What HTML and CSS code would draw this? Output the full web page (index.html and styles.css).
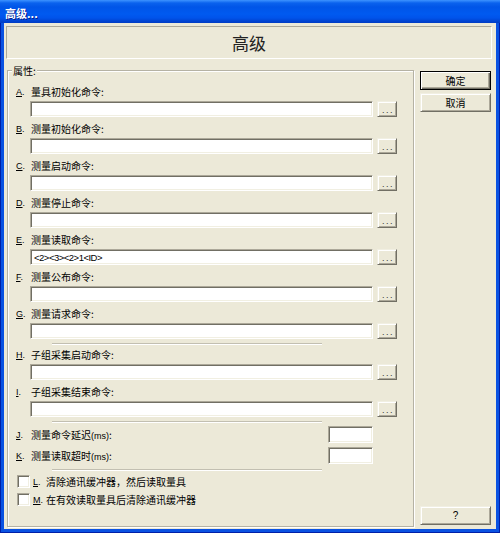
FILE: index.html
```html
<!DOCTYPE html>
<html lang="zh-CN">
<head>
<meta charset="utf-8">
<title>高级...</title>
<link rel="stylesheet" href="styles.css">
</head>
<body>
<div class="window">
  <div class="titlebar">高级...</div>
  <div class="frame">
    <div class="client">
      <div class="header">高级</div>
      <div class="main">
        <div class="group">
          <span class="legend">属性:</span>

          <div class="field">
            <div class="label"><span class="key"><u>A</u>.</span><span>量具初始化命令:</span></div>
            <div class="input-row"><div class="input"></div><div class="more">...</div></div>
          </div>
          <div class="field">
            <div class="label"><span class="key"><u>B</u>.</span><span>测量初始化命令:</span></div>
            <div class="input-row"><div class="input"></div><div class="more">...</div></div>
          </div>
          <div class="field">
            <div class="label"><span class="key"><u>C</u>.</span><span>测量启动命令:</span></div>
            <div class="input-row"><div class="input"></div><div class="more">...</div></div>
          </div>
          <div class="field">
            <div class="label"><span class="key"><u>D</u>.</span><span>测量停止命令:</span></div>
            <div class="input-row"><div class="input"></div><div class="more">...</div></div>
          </div>
          <div class="field">
            <div class="label"><span class="key"><u>E</u>.</span><span>测量读取命令:</span></div>
            <div class="input-row"><div class="input"><span class="value">&lt;2&gt;&lt;3&gt;&lt;2&gt;1&lt;ID&gt;</span></div><div class="more">...</div></div>
          </div>
          <div class="field">
            <div class="label"><span class="key"><u>F</u>.</span><span>测量公布命令:</span></div>
            <div class="input-row"><div class="input"></div><div class="more">...</div></div>
          </div>
          <div class="field">
            <div class="label"><span class="key"><u>G</u>.</span><span>测量请求命令:</span></div>
            <div class="input-row"><div class="input"></div><div class="more">...</div></div>
          </div>

          <div class="sep"></div>

          <div class="field">
            <div class="label"><span class="key"><u>H</u>.</span><span>子组采集启动命令:</span></div>
            <div class="input-row"><div class="input"></div><div class="more">...</div></div>
          </div>
          <div class="field">
            <div class="label"><span class="key"><u>I</u>.</span><span>子组采集结束命令:</span></div>
            <div class="input-row"><div class="input"></div><div class="more">...</div></div>
          </div>

          <div class="sep"></div>

          <div class="jk">
            <div class="jk-row"><span class="key"><u>J</u>.</span><span class="jk-text">测量命令延迟<span class="ms">(ms)</span>:</span><div class="input small"></div></div>
            <div class="jk-row"><span class="key"><u>K</u>.</span><span class="jk-text">测量读取超时<span class="ms">(ms)</span>:</span><div class="input small"></div></div>
          </div>

          <div class="sep"></div>

          <div class="checks">
            <div class="check"><span class="box"></span><span class="ckey"><u>L</u>.</span><span>清除通讯缓冲器，然后读取量具</span></div>
            <div class="check"><span class="box"></span><span class="ckey"><u>M</u>.</span><span>在有效读取量具后清除通讯缓冲器</span></div>
          </div>
        </div>

        <div class="side">
          <div class="btn default">确定</div>
          <div class="btn">取消</div>
          <div class="btn help">?</div>
        </div>
      </div>
    </div>
  </div>
</div>
</body>
</html>
```
FILE: styles.css
```css
* { box-sizing: border-box; }
html, body { margin: 0; padding: 0; }
body {
  width: 500px;
  height: 533px;
  overflow: hidden;
  font-family: "Noto Sans CJK SC", "Liberation Sans", sans-serif;
  font-size: 10px;
  color: #000;
  background: #0A4FDE;
}
.window {
  width: 500px;
  height: 533px;
  display: flex;
  flex-direction: column;
}
.titlebar {
  flex: none;
  height: 23px;
  line-height: 26px;
  padding-left: 5px;
  color: #fff;
  font-weight: bold;
  font-size: 11px;
  background: linear-gradient(to bottom, #3D93FF 0px, #0A62EE 3px, #0055E8 7px, #005AF0 14px, #0053EA 18px, #0044D2 21px, #003CC4 23px);
  text-shadow: 1px 1px 0 #0A1E8A;
}
.frame {
  flex: 1;
  display: flex;
  padding: 0 4px 4px 4px;
  background: #0A52E2;
  box-shadow: inset 1px 0 #0020A8, inset -1px 0 #0020A8, inset 0 -1px #0020A8;
}
.client {
  flex: 1;
  display: flex;
  flex-direction: column;
  background: #ECE9D8;
}
.header {
  flex: none;
  margin: 3px 4px 0 2px;
  height: 33px;
  border: 1px solid;
  border-color: #ACA899 #fff #fff #ACA899;
  display: flex;
  align-items: center;
  justify-content: center;
  font-size: 17px;
  color: #222;
}
.main {
  display: flex;
  align-items: flex-start;
  margin-top: 11px;
}
.group {
  position: relative;
  margin-left: 3px;
  width: 407px;
  height: 457px;
  border: 1px solid #B5B2A4;
  box-shadow: inset 1px 1px 0 #fff, 1px 1px 0 #fff;
  padding: 13px 0 0 8px;
}
.legend {
  position: absolute;
  top: -8px;
  left: 4px;
  padding: 0 1px;
  line-height: 16px;
  background: #ECE9D8;
}
.field { margin-bottom: 4px; }
.label {
  display: flex;
  height: 16px;
  line-height: 16px;
  margin-bottom: 1px;
  white-space: nowrap;
}
.key {
  flex: none;
  width: 15px;
  font-family: "Liberation Sans", sans-serif;
  font-size: 9px;
}
.key u, .ckey u { text-underline-offset: 1px; }
.input-row {
  display: flex;
  gap: 4px;
  margin-left: 14px;
}
.input {
  width: 343px;
  height: 16px;
  background: #fff;
  border: 1px solid;
  border-color: #ACA899 #fff #fff #ACA899;
  box-shadow: inset 1px 1px 0 #716F64, inset -1px -1px 0 #F1EFE2;
  display: flex;
  align-items: center;
  padding-left: 3px;
}
.input.small {
  width: 45px;
  height: 17px;
  flex: none;
}
.value {
  font-family: "Liberation Sans", sans-serif;
  font-size: 9.5px;
  letter-spacing: -0.5px;
  color: #000;
}
.ms {
  font-family: "Liberation Sans", sans-serif;
  font-size: 9px;
}
.more {
  flex: none;
  width: 20px;
  height: 16px;
  border: 1px solid;
  border-color: #F1EFE2 #716F64 #716F64 #F1EFE2;
  box-shadow: inset 1px 1px 0 #fff, inset -1px -1px 0 #ACA899;
  background: #ECE9D8;
  font-family: "Liberation Sans", sans-serif;
  font-size: 9px;
  letter-spacing: 1.5px;
  text-align: center;
  line-height: 17px;
  padding-left: 2px;
  color: #333;
}
.sep {
  margin: 3px 0 2px 36px;
  width: 270px;
  height: 2px;
  border-top: 1px solid #C2BFB1;
  border-bottom: 1px solid #fff;
}
.jk {
  display: flex;
  flex-direction: column;
  gap: 4px;
  margin: 3px 0 5px 0;
}
.jk-row {
  display: flex;
  align-items: center;
  width: 357px;
  height: 17px;
  white-space: nowrap;
}
.jk-text { flex: 1; }
.checks {
  display: flex;
  flex-direction: column;
  gap: 5px;
  margin-top: 4px;
  padding-left: 1px;
}
.check {
  display: flex;
  align-items: center;
  height: 13px;
  white-space: nowrap;
}
.box {
  flex: none;
  width: 13px;
  height: 13px;
  margin-right: 3px;
  background: #fff;
  border: 1px solid;
  border-color: #ACA899 #fff #fff #ACA899;
  box-shadow: inset 1px 1px 0 #716F64, inset -1px -1px 0 #F1EFE2;
}
.ckey {
  flex: none;
  width: 13px;
  font-family: "Liberation Sans", sans-serif;
  font-size: 9px;
}
.side {
  margin-left: 6px;
  width: 71px;
  height: 457px;
  display: flex;
  flex-direction: column;
  padding: 1px 0 2px 0;
}
.btn {
  height: 19px;
  border: 1px solid;
  border-color: #F1EFE2 #716F64 #716F64 #F1EFE2;
  box-shadow: inset 1px 1px 0 #fff, inset -1px -1px 0 #ACA899;
  background: #ECE9D8;
  display: flex;
  align-items: center;
  justify-content: center;
  font-size: 10px;
}
.btn + .btn { margin-top: 3px; }
.btn.default {
  border-color: #000;
  box-shadow: inset 1px 1px 0 #fff, inset -1px -1px 0 #716F64, inset -2px -2px 0 #ACA899;
}
.btn.help {
  margin-top: auto;
  font-family: "Liberation Sans", sans-serif;
  font-size: 10px;
}
```
